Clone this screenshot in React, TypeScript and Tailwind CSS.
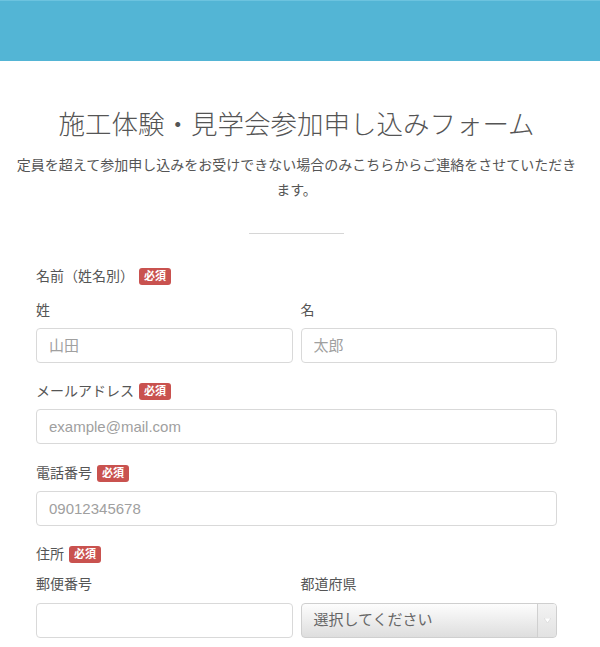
function Badge() {
  return (
    <span className="ml-[5px] inline-flex h-[17px] items-center rounded-[3px] bg-[#c9524f] px-[5px] text-[11px] font-bold leading-none text-white">
      必須
    </span>
  );
}

function Label({ text, required }: { text: string; required?: boolean }) {
  return (
    <div className="flex h-5 items-center text-[14px] leading-5 text-[#555]">
      <span>{text}</span>
      {required && <Badge />}
    </div>
  );
}

function Field({ placeholder }: { placeholder?: string }) {
  return (
    <input
      type="text"
      placeholder={placeholder}
      className="block h-[35px] w-full rounded-[4px] border border-[#d9d9d9] bg-white px-3 text-[15px] text-[#555] placeholder:text-[#a0a0a0] outline-none"
    />
  );
}

function Select() {
  return (
    <div className="flex h-[35px] w-full overflow-hidden rounded-[4px] border border-[#cfcfcf] bg-gradient-to-b from-[#fdfdfd] to-[#dedede]">
      <span className="flex flex-1 items-center px-3 text-[15px] text-[#666]">選択してください</span>
      <span className="flex w-[19px] items-center justify-center border-l border-[#d0d0d0] bg-gradient-to-b from-[#f3f3f3] to-[#e2e2e2]">
        <svg width="7" height="5" viewBox="0 0 7 5">
          <path d="M0 0 L7 0 L3.5 5 Z" fill="#ffffff" stroke="#cfcfcf" strokeWidth="0.5" />
        </svg>
      </span>
    </div>
  );
}

export default function App() {
  return (
    <div
      className="min-h-[647px] bg-white"
      style={{ fontFamily: '"Liberation Sans", "Noto Sans CJK JP", sans-serif' }}
    >
      <div className="h-[61px] border-t border-[#6cc3df] bg-[#53b5d5]" />

      <div className="pl-9 pr-[43px]">
        <h1 className="-mx-6 mt-12 text-center text-[26.5px] font-light leading-8 text-[#555]">
          施工体験・見学会参加申し込みフォーム
        </h1>
        <p className="-mx-[22px] mt-3 text-center text-[14px] leading-[25px] text-[#555]">
          定員を超えて参加申し込みをお受けできない場合のみこちらからご連絡をさせていただきます。
        </p>

        <div className="mx-auto mt-[30px] h-px w-[95px] bg-[#d6d6d6]" />

        <div className="mt-[32px]">
          <Label text="名前（姓名別）" required />
          <div className="mt-[14px] grid grid-cols-2 gap-2">
            <div>
              <Label text="姓" />
              <div className="mt-2">
                <Field placeholder="山田" />
              </div>
            </div>
            <div>
              <Label text="名" />
              <div className="mt-2">
                <Field placeholder="太郎" />
              </div>
            </div>
          </div>
        </div>

        <div className="mt-[18px]">
          <Label text="メールアドレス" required />
          <div className="mt-2">
            <Field placeholder="example@mail.com" />
          </div>
        </div>

        <div className="mt-[19px]">
          <Label text="電話番号" required />
          <div className="mt-2">
            <Field placeholder="09012345678" />
          </div>
        </div>

        <div className="mt-[18px]">
          <Label text="住所" required />
          <div className="mt-[10px] grid grid-cols-2 gap-2">
            <div>
              <Label text="郵便番号" />
              <div className="mt-[9px]">
                <Field />
              </div>
            </div>
            <div>
              <Label text="都道府県" />
              <div className="mt-[9px]">
                <Select />
              </div>
            </div>
          </div>
        </div>
      </div>
    </div>
  );
}
